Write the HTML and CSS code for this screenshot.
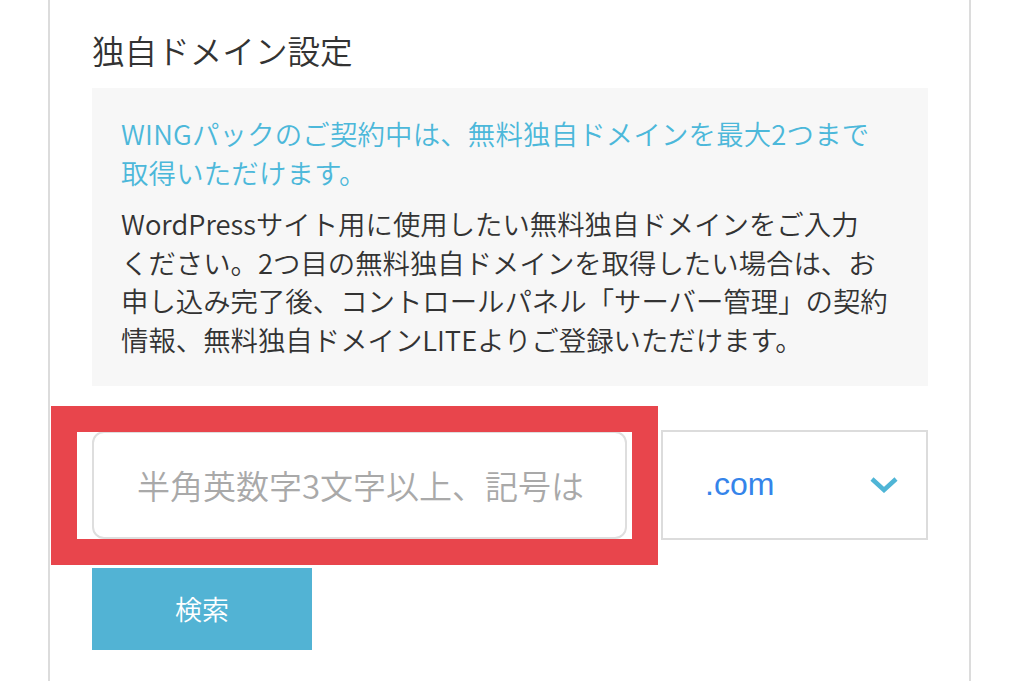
FILE: index.html
```html
<!DOCTYPE html>
<html lang="ja">
<head>
<meta charset="utf-8">
<title>独自ドメイン設定</title>
<link rel="stylesheet" href="styles.css">
</head>
<body>
<div class="page">
  <h2 class="title">独自ドメイン設定</h2>
  <div class="notice">
    <p class="notice-lead">WINGパックのご契約中は、無料独自ドメインを最大2つまで<br>取得いただけます。</p>
    <p class="notice-body">WordPressサイト用に使用したい無料独自ドメインをご入力<br>ください。2つ目の無料独自ドメインを取得したい場合は、お<br>申し込み完了後、コントロールパネル「サーバー管理」の契約<br>情報、無料独自ドメインLITEよりご登録いただけます。</p>
  </div>
  <div class="domain-row">
    <div class="input-wrap">
      <input class="domain-input" type="text" placeholder="半角英数字3文字以上、記号は">
      <div class="highlight"></div>
    </div>
    <div class="tld-select">
      <span class="tld-value">.com</span>
      <svg class="chevron" width="28" height="16" viewBox="0 0 28 16"><polyline points="2,2 14,13 26,2" fill="none" stroke="#4fb5d6" stroke-width="4.5"/></svg>
    </div>
  </div>
  <button class="search-btn" type="button">検索</button>
</div>
</body>
</html>
```

FILE: styles.css
```css
html, body {
  margin: 0;
  padding: 0;
  background: #fff;
}
body {
  font-family: "Noto Sans CJK JP", sans-serif;
  font-weight: 350;
  color: #333;
  overflow: hidden;
}
.page {
  box-sizing: border-box;
  margin-left: 48px;
  width: 923px;
  min-height: 681px;
  border-left: 2px solid #dcdcdc;
  border-right: 2px solid #dcdcdc;
  padding: 25px 41px 0 42px;
}
.title {
  margin: 0 0 14px;
  font-size: 32.6px;
  line-height: 49px;
  font-weight: 350;
  color: #333;
}
.notice {
  background: #f7f7f7;
  padding: 26px 20px 27px 29px;
}
.notice p {
  margin: 0;
  font-size: 27.4px;
  line-height: 38.6px;
  white-space: nowrap;
}
.notice-lead {
  color: #4cb8da;
  margin-bottom: 13px !important;
  letter-spacing: 0.2px;
}
.notice-body {
  color: #333;
}
.domain-row {
  display: flex;
  align-items: flex-start;
  gap: 34px;
  margin-top: 45px;
}
.input-wrap {
  position: relative;
  width: 535px;
  height: 108px;
}
.domain-input {
  box-sizing: border-box;
  width: 100%;
  height: 100%;
  border: 2px solid #dedede;
  border-radius: 12px;
  padding: 0 0 0 43px;
  font-family: "Noto Sans CJK JP", sans-serif;
  font-weight: 350;
  font-size: 33px;
  color: #333;
  background: #fff;
  outline: none;
}
.domain-input::placeholder {
  color: #a9a9a9;
}
.highlight {
  position: absolute;
  box-sizing: border-box;
  left: -41px;
  top: -25px;
  width: 607px;
  height: 159px;
  border: 26px solid #e8454c;
  pointer-events: none;
}
.tld-select {
  box-sizing: border-box;
  width: 267px;
  height: 110px;
  margin-top: -1px;
  border: 2px solid #dcdcdc;
  display: flex;
  align-items: center;
  justify-content: space-between;
  padding: 0 28px 0 42px;
}
.tld-value {
  font-family: "Liberation Sans", sans-serif;
  font-size: 32px;
  color: #3584ea;
}
.chevron {
  display: block;
}
.search-btn {
  display: block;
  margin-top: 28px;
  width: 220px;
  height: 82px;
  border: none;
  background: #52b3d4;
  color: #fff;
  font-family: "Noto Sans CJK JP", sans-serif;
  font-weight: 350;
  font-size: 27px;
  padding: 0;
}
```
